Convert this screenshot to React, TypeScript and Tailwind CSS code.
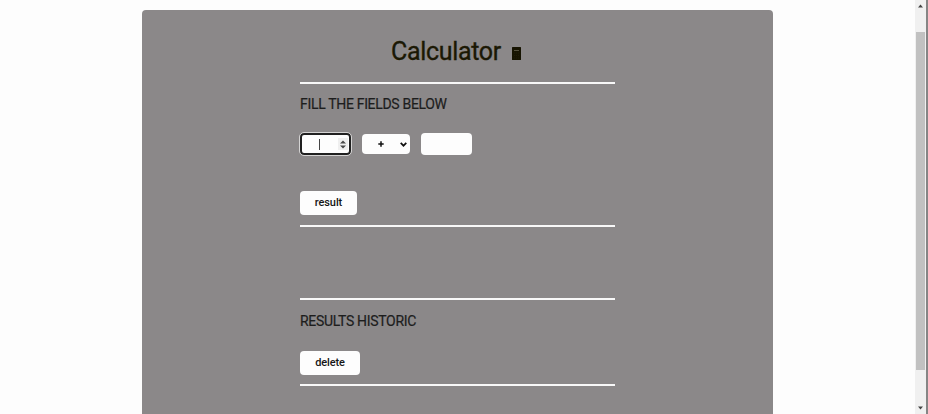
import type { ReactNode } from "react";

function Divider() {
  return <hr className="h-[2px] shrink-0 border-0 bg-[#f8f8f8]" />;
}

function Heading({ children, className }: { children: ReactNode; className: string }) {
  return (
    <h2 className={`whitespace-nowrap text-[14px] leading-5 tracking-[-0.32px] text-[#1d1d1d] [-webkit-text-stroke:0.2px_#1d1d1d] ${className}`}>{children}</h2>
  );
}

function ActionButton({ children, className }: { children: ReactNode; className: string }) {
  return (
    <button
      className={`flex h-6 items-center justify-center rounded bg-[#fdfdfd] pt-px text-[11px] font-medium tracking-[-0.1px] text-[#161616] ${className}`}
    >
      {children}
    </button>
  );
}

function Calculator() {
  return (
    <svg className="mt-[3px] h-[13px] w-[9px]" viewBox="0 0 9 13">
      <rect width="9" height="13" rx=".5" fill="#171402" />
      <path d="M2 3.5h5" stroke="#54503c" strokeWidth="1" />
      <path d="M2 6h5M2 8.5h5M2 11h5" stroke="#24200c" strokeWidth=".7" strokeDasharray="1 1" />
    </svg>
  );
}

function Scrollbar() {
  return (
    <div className="flex w-[13px] shrink-0 border-r-2 border-[#858585] bg-[#f0f0f0]">
      <div className="flex w-[11px] flex-col items-center">
        <svg className="mt-1 h-1 w-[5px] shrink-0" viewBox="0 0 5 4">
          <path d="M2.5 .5 5 3.5H0Z" fill="#444" />
        </svg>
        <div className="mt-6 h-[338px] w-[9px] shrink-0 bg-[#c1c1c1]" />
        <svg className="mt-[36px] h-1 w-[5px] shrink-0" viewBox="0 0 5 4">
          <path d="M0 .5h5L2.5 3.5Z" fill="#444" />
        </svg>
      </div>
    </div>
  );
}

export default function App() {
  return (
    <div className="flex h-[414px] w-[928px] overflow-hidden bg-[#fdfdfd] font-['Roboto','Inter',sans-serif]">
      <div className="flex w-[915px] justify-center pt-[10px]">
        <main className="flex h-[420px] w-[631px] shrink-0 justify-center rounded-t bg-[#8b8889]">
          <section className="flex w-[315px] flex-col">
            <header className="mt-[25px] flex h-[34px] items-center pl-[91px]">
              <h1 className="w-[121px] whitespace-nowrap text-[25px] leading-8 tracking-[-0.32px] text-[#1b1804] [-webkit-text-stroke:0.35px_#1b1804]">
                Calculator
              </h1>
              <Calculator />
            </header>
            <div className="h-[13px] shrink-0" />
            <Divider />
            <Heading className="mt-[10px]">FILL THE FIELDS BELOW</Heading>
            <div className="mt-[19px] flex h-[22px] items-center">
              <div className="flex h-[22px] w-[51px] items-center justify-between rounded border-2 border-[#202020] bg-[#fdfdfd] pr-px pl-[17px] outline outline-[#d5d4d4]">
                <span className="h-[11px] w-px bg-[#444]" />
                <span className="flex h-3 w-[10px] items-center justify-center bg-[#efefef]">
                  <svg className="h-[9px] w-[6px]" viewBox="0 0 6 9">
                    <path d="M3 .5 6 3.5H0ZM0 5.5h6L3 8.5Z" fill="#484848" />
                  </svg>
                </span>
              </div>
              <div className="ml-[11px] flex h-5 w-[48px] items-center justify-between rounded bg-[#fdfdfd] pr-[3px] pl-4">
                <svg className="h-[6px] w-[6px]" viewBox="0 0 6 6">
                  <path d="M3 .3v5.4M.3 3h5.4" stroke="#111" strokeWidth="1.5" />
                </svg>
                <svg className="h-[5px] w-[7px]" viewBox="0 0 7 5">
                  <path d="m.7.9 2.8 2.8L6.3.9" fill="none" stroke="#111" strokeWidth="1.7" />
                </svg>
              </div>
              <div className="ml-[11px] h-[22px] w-[51px] rounded bg-[#fdfdfd]" />
            </div>
            <div className="mt-9 flex">
              <ActionButton className="w-[57px]">result</ActionButton>
            </div>
            <div className="h-[10px] shrink-0" />
            <Divider />
            <div className="h-[71px] shrink-0" />
            <Divider />
            <Heading className="mt-[11px]">RESULTS HISTORIC</Heading>
            <div className="mt-5 flex">
              <ActionButton className="w-[60px]">delete</ActionButton>
            </div>
            <div className="h-[9px] shrink-0" />
            <Divider />
          </section>
        </main>
      </div>
      <Scrollbar />
    </div>
  );
}
